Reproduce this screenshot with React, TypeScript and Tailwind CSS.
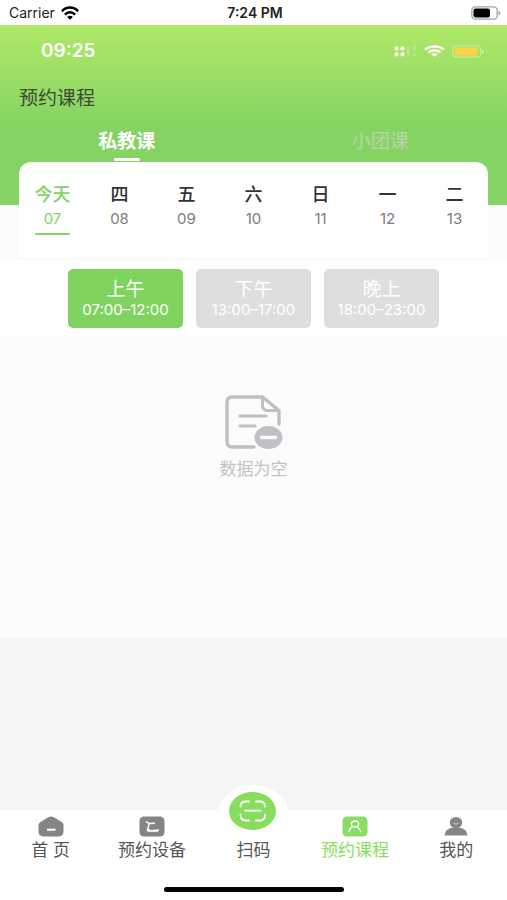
import { useState } from 'react';
import type { ReactNode } from 'react';

const TABS = ['私教课', '小团课'];

const DAYS = [
  { label: '今天', date: '07' },
  { label: '四', date: '08' },
  { label: '五', date: '09' },
  { label: '六', date: '10' },
  { label: '日', date: '11' },
  { label: '一', date: '12' },
  { label: '二', date: '13' },
];

const PERIODS = [
  { label: '上午', range: '07:00–12:00' },
  { label: '下午', range: '13:00–17:00' },
  { label: '晚上', range: '18:00–23:00' },
];

function WifiIcon({ className }: { className: string }) {
  return (
    <svg viewBox="0 0 20 14" preserveAspectRatio="none" className={className} aria-hidden="true">
      <g fill="none" stroke="currentColor" strokeWidth="2.6">
        <path d="M1 5.2C6 .3 14 .3 19 5.2" />
        <path d="M4.3 8.6c3.2-3.1 8.2-3.1 11.4 0" />
      </g>
      <path d="M10 13.8 6.8 10.9c1.8-1.6 4.6-1.6 6.4 0z" fill="currentColor" />
    </svg>
  );
}

function SystemBar() {
  return (
    <div className="grid h-[25px] grid-cols-3 items-center bg-white pl-[9px] pr-1.5 text-sm text-[#222]">
      <div className="flex items-center gap-1.5">
        <span>Carrier</span>
        <WifiIcon className="h-[14px] w-[18px] text-black" />
      </div>
      <span className="text-center font-semibold">7:24 PM</span>
      <svg viewBox="0 0 30 14" className="h-[14px] w-[30px] justify-self-end" aria-hidden="true">
        <rect x=".8" y=".8" width="25.4" height="12.4" rx="3.6" fill="none" stroke="#a3a3a3" strokeWidth="1.3" />
        <rect x="2.5" y="2.4" width="16.5" height="9.2" rx="2" fill="#000" />
        <path d="M27.6 5v4.4q1.8-.7 1.8-2.2T27.6 5z" fill="#a3a3a3" />
      </svg>
    </div>
  );
}

function PhoneBar() {
  return (
    <div className="flex h-[52px] items-center justify-between pl-[41px] pr-[22px] text-white">
      <span className="text-[19px] font-semibold">09:25</span>
      <div className="flex items-center gap-[7px]">
        <svg viewBox="0 0 23 12" className="h-3 w-[23px]" fill="#fff" aria-hidden="true">
          <circle cx="2.5" cy="3.4" r="2.1" />
          <circle cx="8.5" cy="3.4" r="2.1" />
          <circle cx="2.5" cy="9.4" r="2.1" />
          <circle cx="8.5" cy="9.4" r="2.1" />
          <g opacity=".18">
            <rect x="13" y="1" width="3" height="10" rx="1" />
            <rect x="19" y="0" width="3" height="6" rx="1" />
            <rect x="19" y="8" width="3" height="3" rx="1" />
          </g>
        </svg>
        <WifiIcon className="h-3 w-[21px]" />
        <svg viewBox="0 0 33 13" className="h-[13px] w-[33px]" aria-hidden="true">
          <rect x=".7" y=".9" width="28" height="11.2" rx="3.4" fill="none" stroke="#fff" strokeOpacity=".45" />
          <rect x="2.2" y="2.4" width="23" height="8.2" rx="2" fill="#fdd04a" />
          <path d="M30 5v3.4q1.8-.5 1.8-1.7T30 5z" fill="#fff" fillOpacity=".6" />
        </svg>
      </div>
    </div>
  );
}

function EmptyState() {
  return (
    <div className="flex flex-col items-center gap-2 text-[17px] leading-6 text-[#c2c2c4]">
      <svg viewBox="0 0 58 54" className="h-[54px] w-[58px]" fill="none" stroke="#bfc0c5" aria-hidden="true">
        <path
          d="M29 52H7.5Q2 52 2 46.5V7.5Q2 2 7.5 2h30L54 15.5V29"
          strokeWidth="3.4"
          strokeLinecap="round"
          strokeLinejoin="round"
        />
        <path d="M37.500 2v8.500q0 5 5.500 5h10.500" strokeWidth="3" />
        <path d="M15 21h26M15 31h15" strokeWidth="3.2" strokeLinecap="round" />
        <ellipse cx="43.500" cy="42.500" rx="14" ry="11.400" fill="#bfc0c5" stroke="none" />
        <path d="M36.500 42.500h14" stroke="#fff" strokeWidth="3.400" strokeLinecap="round" />
      </svg>
      <p>数据为空</p>
    </div>
  );
}

function HomeIcon() {
  return (
    <svg viewBox="0 0 26 21" className="h-[21px] w-[26px]" aria-hidden="true">
      <path
        d="M10.200 1.200Q13-.2 15.800 1.200L23.600 6Q25.500 7.300 25.500 9.300V15.500Q25.500 20.500 19.500 20.500H6.500Q.5 20.500.5 15.500V9.300Q.5 7.300 2.400 6z"
        fill="currentColor"
      />
      <path d="M9 13.700h8.500" stroke="#fff" strokeWidth="2" />
    </svg>
  );
}

function DeviceIcon() {
  return (
    <svg viewBox="0 0 26 21" className="h-[21px] w-[26px]" aria-hidden="true">
      <rect x=".5" y=".5" width="25" height="20" rx="4.500" fill="currentColor" />
      <path
        d="M7.500 5.800 10.500 7.500 15.500 7.200M10.300 7.500 8.800 12.500"
        fill="none"
        stroke="#fff"
        strokeWidth="1.400"
        strokeLinecap="round"
      />
      <path d="M8 11.800 12 13.900 19.800 13.200Q20.200 15.500 18.500 15.800H9Q7 15.200 8 11.800z" fill="#fff" />
    </svg>
  );
}

function CourseIcon() {
  return (
    <svg viewBox="0 0 26 21" className="h-[21px] w-[26px]" aria-hidden="true">
      <rect x=".5" y=".5" width="25" height="20" rx="4.500" fill="currentColor" />
      <g fill="none" stroke="#fff" strokeWidth="1.300" strokeLinecap="round">
        <ellipse cx="13" cy="8" rx="3.600" ry="3" />
        <path d="M10.700 10.500Q7.500 12 7 15.500M14.500 10.700Q17.500 12 18.800 15.800" />
      </g>
    </svg>
  );
}

function ProfileIcon() {
  return (
    <svg viewBox="0 0 26 21" className="h-[21px] w-[26px]" aria-hidden="true">
      <ellipse cx="13" cy="6.500" rx="6.200" ry="5.500" fill="currentColor" />
      <path d="M1.500 19.500Q2 12.500 10 11.400h6Q24 12.500 24.500 19.500z" fill="currentColor" />
      <path d="M10.300 7.300q2.700 1.800 5.400 0" fill="none" stroke="#fff" strokeWidth="1" opacity=".6" />
    </svg>
  );
}

function ScanIcon() {
  return (
    <svg viewBox="0 0 72 50" className="h-[50px] w-[72px]" aria-hidden="true">
      <ellipse cx="36" cy="31" rx="36" ry="30" fill="#fff" />
      <ellipse cx="35.500" cy="27" rx="23.500" ry="19" fill="#86de5c" />
      <g fill="none" stroke="#fff" strokeWidth="1.800" strokeLinecap="round">
        <path d="M32 17.500h-3q-5.500 0-5.500 5M39 17.500h4q5 0 5 5M23.500 30.500q0 6 5.500 6h3M48 30.500q0 6-5 6h-4M28 26.700h15.500" />
      </g>
    </svg>
  );
}

function NavItem({ label, icon, active = false }: { label: string; icon: ReactNode; active?: boolean }) {
  return (
    <a
      href="#"
      aria-current={active ? 'page' : undefined}
      className={`flex flex-col items-center justify-end gap-px whitespace-pre ${
        active ? 'text-[#8bdc64]' : 'text-[#858585]'
      }`}
    >
      {icon}
      <span className={active ? 'text-[#8bdc64]' : 'text-[#555]'}>{label}</span>
    </a>
  );
}

export default function App() {
  const [tab, setTab] = useState(0);
  const [day, setDay] = useState(0);
  const [period, setPeriod] = useState(0);

  return (
    <div className="flex min-h-screen flex-col bg-[#f5f5f5] font-[Inter,'Noto_Sans_CJK_SC',sans-serif]">
      <SystemBar />

      <header className="bg-linear-to-b from-[#b1e967] to-[#85d463] to-55% pb-[43px]">
        <PhoneBar />
        <h1 className="pt-0.5 pl-[19px] text-[19px] leading-10 text-[#3d4a35]">预约课程</h1>
        <div role="tablist" className="grid grid-cols-2 pt-1">
          {TABS.map((label, i) => (
            <button
              key={label}
              type="button"
              role="tab"
              aria-selected={tab === i}
              onClick={() => setTab(i)}
              className={`flex flex-col items-center gap-[3px] pt-1.5 pb-px text-[19px] leading-[26px] ${
                tab === i ? 'font-bold text-white' : 'text-[#b9d4ab]'
              }`}
            >
              {label}
              <span className={`h-[3px] w-[26px] rounded-full ${tab === i ? 'bg-white' : ''}`} />
            </button>
          ))}
        </div>
      </header>

      <main className="min-h-[433px] bg-[#fbfbfb]">
        <section className="relative mx-[19px] -mt-[43px] grid h-24 grid-cols-7 rounded-t-xl bg-white">
          {DAYS.map((d, i) => (
            <button
              key={d.date}
              type="button"
              aria-pressed={day === i}
              onClick={() => setDay(i)}
              className={`flex flex-col items-center pt-[21px] ${day === i ? 'text-[#84d364]' : 'text-[#7d7d7d]'}`}
            >
              <span className={`text-lg leading-6 font-medium ${day === i ? '' : 'text-[#333]'}`}>{d.label}</span>
              <span className="text-[15px] leading-6">{d.date}</span>
              <span className={`mt-0.5 h-0.5 w-[35px] rounded-full ${day === i ? 'bg-[#84d364]' : ''}`} />
            </button>
          ))}
        </section>

        <section className="mt-0.5 flex justify-center gap-[13px] bg-white py-[9px]">
          {PERIODS.map((p, i) => (
            <button
              key={p.label}
              type="button"
              aria-pressed={period === i}
              onClick={() => setPeriod(i)}
              className={`flex h-[59px] w-[115px] flex-col items-center justify-center rounded-[5px] pt-0.5 text-white ${
                period === i ? 'bg-[#80d35f]' : 'bg-[#dedede]'
              }`}
            >
              <span className="text-[19px] leading-5">{p.label}</span>
              <span className="text-[15px] leading-5">{p.range}</span>
            </button>
          ))}
        </section>

        <section className="pt-[58px]">
          <EmptyState />
        </section>
      </main>

      <nav className="mt-auto bg-white pb-2">
        <div className="grid grid-cols-5 pb-[25px] text-[17px] leading-6">
          <NavItem label="首 页" icon={<HomeIcon />} />
          <NavItem label="预约设备" icon={<DeviceIcon />} />
          <a href="#" className="-mt-[26px] flex flex-col items-center gap-1 text-[#555]">
            <ScanIcon />
            <span>扫码</span>
          </a>
          <NavItem label="预约课程" icon={<CourseIcon />} active />
          <NavItem label="我的" icon={<ProfileIcon />} />
        </div>
        <div className="mx-auto h-[5px] w-[180px] rounded-full bg-black" />
      </nav>
    </div>
  );
}
